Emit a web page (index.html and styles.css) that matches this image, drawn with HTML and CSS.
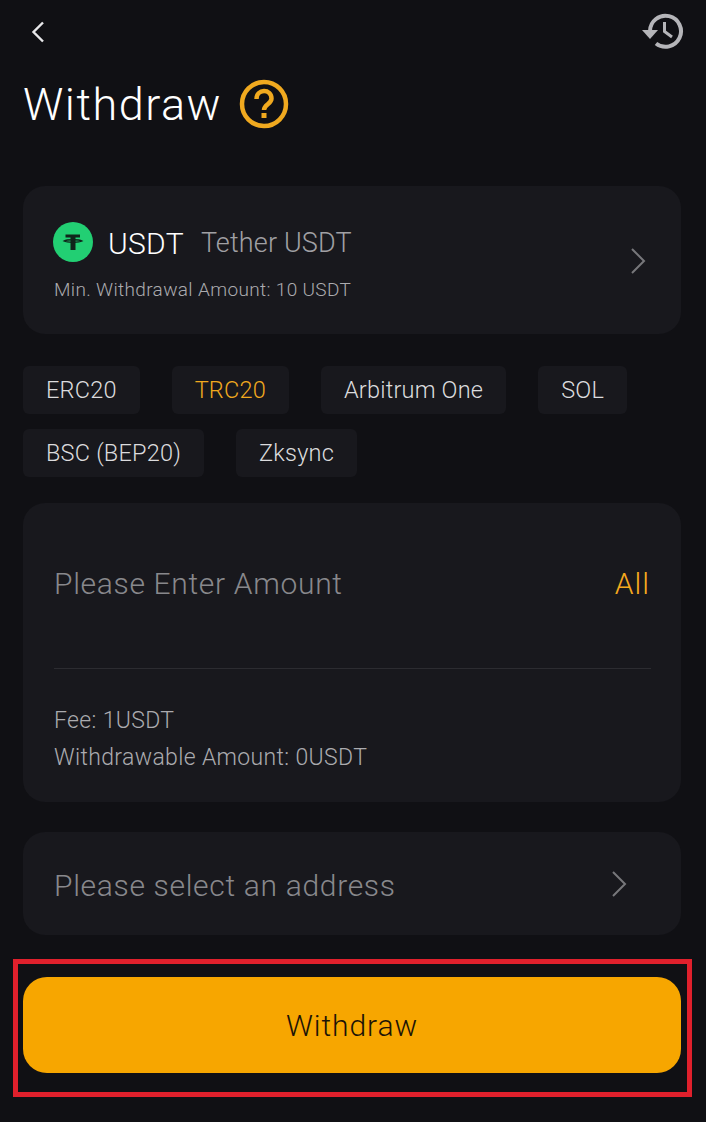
FILE: index.html
```html
<!DOCTYPE html>
<html lang="en">
<head>
    <meta charset="UTF-8">
    <title>Withdraw</title>
    <link rel="stylesheet" href="styles.css">
</head>
<body>
<div class="page">
    <div class="top-bar">
        <svg class="back" width="16" height="22" viewBox="0 0 16 22"><path d="M13 1.5 3.5 11 13 20.5" fill="none" stroke="#e8e8ea" stroke-width="2.4"/></svg>
        <svg class="history" width="44" height="38" viewBox="0 0 44 38">
            <path d="M9 19A15.5 15.5 0 1 1 15 31.5" fill="none" stroke="#b5b5b9" stroke-width="4"/>
            <path d="M1 18H17L9 27Z" fill="#b5b5b9"/>
            <path d="M23.5 10V19.5L31 25" fill="none" stroke="#b5b5b9" stroke-width="3"/>
        </svg>
    </div>

    <div class="title-row">
        <h1>Withdraw</h1>
        <svg width="50" height="50" viewBox="0 0 50 50">
            <circle cx="25" cy="25" r="22" fill="none" stroke="#f0a91f" stroke-width="4.5"/>
            <path d="M17.5 20C17.5 9.5 32.5 9.5 32.5 19.5 32.5 25 25 25.5 25 31" fill="none" stroke="#f0a91f" stroke-width="4.5"/>
            <rect x="22.5" y="34" width="5" height="5" fill="#f0a91f"/>
        </svg>
    </div>

    <div class="card coin-card">
        <div>
            <div class="coin-row">
                <svg class="coin-icon" width="40" height="40" viewBox="0 0 40 40">
                    <circle cx="20" cy="20" r="20" fill="#22cf73"/>
                    <path d="M12.5 12.5H27V15.5H22.5V28H17.5V15.5H12.5Z" fill="#10251b"/>
                    <path d="M11 19C14 17.4 26 17.4 29 19 26 20.6 14 20.6 11 19Z" fill="none" stroke="#10251b" stroke-width="1.4"/>
                </svg>
                <span class="coin-symbol">USDT</span>
                <span class="coin-name">Tether USDT</span>
            </div>
            <div class="min-amount">Min. Withdrawal Amount: 10 USDT</div>
        </div>
        <svg class="chevron" width="16" height="28" viewBox="0 0 16 28"><path d="M2 2 14 14 2 26" fill="none" stroke="#77777b" stroke-width="2"/></svg>
    </div>

    <div class="chips">
        <span class="chip">ERC20</span>
        <span class="chip active">TRC20</span>
        <span class="chip">Arbitrum One</span>
        <span class="chip">SOL</span>
        <span class="chip">BSC (BEP20)</span>
        <span class="chip">Zksync</span>
    </div>

    <div class="card amount-card">
        <div class="amount-row">
            <span class="placeholder">Please Enter Amount</span>
            <span class="all">All</span>
        </div>
        <div class="fees">
            <div>Fee: 1USDT</div>
            <div>Withdrawable Amount: 0USDT</div>
        </div>
    </div>

    <div class="card address-card">
        <span class="placeholder">Please select an address</span>
        <svg class="chevron" width="16" height="28" viewBox="0 0 16 28"><path d="M2 2 14 14 2 26" fill="none" stroke="#77777b" stroke-width="2"/></svg>
    </div>

    <div class="highlight">
        <button type="button" class="submit">Withdraw</button>
    </div>
</div>
</body>
</html>
```

FILE: styles.css
```css
* {
    box-sizing: border-box;
}
body {
    margin: 0;
    background-color: #101014;
    font-family: Roboto, "Noto Sans", sans-serif;
    color: #fff;
}
.page {
    width: 706px;
    height: 1122px;
    padding: 0 25px 0 23px;
    overflow: hidden;
}
.top-bar {
    height: 62px;
    display: flex;
    justify-content: space-between;
    align-items: flex-start;
    padding-top: 12px;
}
.back {
    margin: 9px 0 0 7px;
}
.history {
    margin-right: -4px;
}
.title-row {
    height: 84px;
    display: flex;
    align-items: center;
    gap: 17px;
}
h1 {
    margin: 0;
    font-size: 45px;
    font-weight: 300;
    letter-spacing: 1.5px;
}
.card {
    background-color: #18181d;
    border-radius: 22px;
}
.coin-card {
    height: 148px;
    margin-top: 40px;
    padding: 2px 29px 0 31px;
    display: flex;
    justify-content: space-between;
    align-items: center;
}
.coin-row {
    display: flex;
    align-items: center;
    margin-left: -1px;
}
.coin-icon {
    margin-right: 15px;
}
.coin-symbol {
    margin-top: 3px;
    font-size: 30px;
    font-weight: 300;
    letter-spacing: 0.3px;
    margin-right: 17px;
}
.coin-name {
    margin-top: 3px;
    font-size: 27px;
    font-weight: 300;
    letter-spacing: 0.15px;
    color: #a0a0a4;
}
.min-amount {
    margin-top: 16px;
    font-size: 19px;
    font-weight: 300;
    letter-spacing: 0.35px;
    color: #ababaf;
}
.chevron {
    flex-shrink: 0;
    margin-right: 6px;
}
.chips {
    margin-top: 32px;
    display: flex;
    flex-wrap: wrap;
    gap: 15px 32px;
}
.chip {
    height: 48px;
    padding: 0 23px;
    display: flex;
    align-items: center;
    background-color: #18181d;
    border-radius: 6px;
    font-size: 23.5px;
    font-weight: 300;
    letter-spacing: 0.2px;
    color: #dcdcde;
}
.chip.active {
    color: #f0a91f;
}
.amount-card {
    height: 299px;
    margin-top: 26px;
    padding: 0 30px 0 31px;
}
.amount-row {
    height: 166px;
    padding-bottom: 4px;
    display: flex;
    justify-content: space-between;
    align-items: center;
    padding-right: 1px;
    border-bottom: 1px solid #2c2c31;
}
.placeholder {
    font-size: 30px;
    font-weight: 300;
    letter-spacing: 0.68px;
    color: #88888c;
}
.address-card .placeholder {
    padding-top: 4px;
}
.all {
    font-size: 30px;
    font-weight: 300;
    letter-spacing: 1px;
    color: #f5a91e;
}
.fees {
    margin-top: 33px;
    font-size: 23px;
    font-weight: 300;
    letter-spacing: 0.35px;
    line-height: 37px;
    color: #ababaf;
}
.address-card {
    height: 103px;
    margin-top: 30px;
    padding: 0 48px 0 31px;
    display: flex;
    justify-content: space-between;
    align-items: center;
}
.highlight {
    margin: 24px -11px 0 -10px;
    height: 138px;
    padding: 13px 6px 13px 5px;
    border: 5px solid #e0202c;
}
.submit {
    width: 100%;
    height: 96px;
    border: none;
    border-radius: 24px;
    background-color: #f7a600;
    color: #1d1407;
    font-family: inherit;
    font-size: 30px;
    font-weight: 300;
    letter-spacing: 0.9px;
}
```
